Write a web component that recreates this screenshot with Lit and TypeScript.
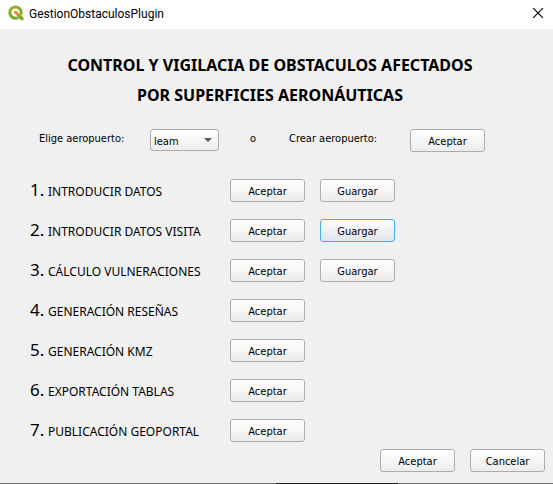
import { LitElement, html, css, svg, nothing } from "lit";
import { customElement, property, state } from "lit/decorators.js";

interface Step {
  label: string;
  save?: boolean;
  active?: boolean;
}

const STEPS: Step[] = [
  { label: "INTRODUCIR DATOS", save: true },
  { label: "INTRODUCIR DATOS VISITA", save: true, active: true },
  { label: "CÁLCULO VULNERACIONES", save: true },
  { label: "GENERACIÓN RESEÑAS" },
  { label: "GENERACIÓN KMZ" },
  { label: "EXPORTACIÓN TABLAS" },
  { label: "PUBLICACIÓN GEOPORTAL" },
];

const logo = svg`
  <defs>
    <linearGradient id="ring" x1="0" y1="0" x2="0" y2="1">
      <stop offset="0" stop-color="#93b023"/>
      <stop offset="1" stop-color="#7aa52c"/>
    </linearGradient>
  </defs>
  <circle cx="7.5" cy="7.6" r="5.7" fill="none" stroke="url(#ring)" stroke-width="3"/>
  <path d="M8.8 8.8h2.6l4.4 4v2.6h-2.8l-4.2-4.2z" fill="#7aa52c" stroke="#fff" stroke-width="0.6"/>
  <path d="M6 6h2.6l2 2v2.2h-2.2l-2.4-2.4z" fill="#ee8a33"/>`;

@customElement("push-button")
export class PushButton extends LitElement {
  @property() label = "";
  @property({ type: Boolean }) active = false;

  static styles = css`
    :host { display: block; width: 75px; }
    .push {
      display: block;
      box-sizing: border-box;
      width: 100%;
      height: 23px;
      padding: 2px 0 0;
      border: 1px solid #acacac;
      border-radius: 3px;
      background: linear-gradient(#ffffff, #ececec);
      color: #000;
      font: 11px/18px "DejaVu Sans Condensed", "DejaVu Sans", sans-serif;
      text-align: center;
    }
    .push.active {
      border-color: #3daef5;
      background: linear-gradient(#fdfeff, #e0e5ea);
    }
  `;

  render() {
    return html`<button type="button" class="push ${this.active ? "active" : ""}">${this.label}</button>`;
  }
}

@customElement("app-root")
export class AppRoot extends LitElement {
  @state() private steps = STEPS;

  static styles = css`
    :host {
      display: flex;
      flex-direction: column;
      min-height: 100vh;
      background: #f0f0f0;
      color: #000;
      font: 11px/16px "DejaVu Sans Condensed", "DejaVu Sans", sans-serif;
    }
    .titlebar {
      display: flex;
      align-items: center;
      gap: 5px;
      box-sizing: border-box;
      height: 29px;
      padding: 0 8px 3px;
      background: #fff;
      font: 12px/16px Roboto, sans-serif;
    }
    .logo { width: 16px; height: 16px; }
    .caption { flex: 1; padding-top: 1px; }
    .close {
      display: flex;
      align-items: center;
      justify-content: center;
      width: 14px;
      height: 14px;
      padding: 0;
      border: 0;
      background: none;
    }
    .heading {
      margin: 21px 13px 0 0;
      font-family: "Noto Sans", sans-serif;
      font-size: 16px;
      line-height: 30px;
      font-weight: 700;
      text-align: center;
    }
    .line { display: block; }
    .airport {
      display: grid;
      grid-template-columns: 111px 100px 39px 121px 75px;
      align-items: start;
      margin: 19px 0 0 39px;
    }
    .caption-text { padding-top: 2px; }
    .combo { position: relative; width: 69px; }
    .select {
      display: block;
      appearance: none;
      box-sizing: border-box;
      width: 100%;
      height: 22px;
      padding: 3px 18px 0 3px;
      border: 1px solid #acacac;
      border-radius: 3px;
      background: linear-gradient(#ffffff, #ececec);
      color: #000;
      font: inherit;
    }
    .arrow {
      position: absolute;
      top: 9px;
      right: 7px;
      width: 8px;
      height: 4px;
      background: #5a5a5a;
      clip-path: polygon(0 0, 100% 0, 50% 100%);
      pointer-events: none;
    }
    .steps {
      display: grid;
      gap: 17px;
      margin: 27px 0 0 30px;
      padding: 0;
      list-style: none;
      font-family: "Noto Sans", sans-serif;
    }
    .step {
      display: grid;
      grid-template-columns: 18px 182px 75px 90px;
      align-items: baseline;
      height: 23px;
    }
    .step push-button { align-self: start; }
    .step push-button + push-button { margin-left: 15px; }
    .number { font-size: 17px; line-height: 21px; }
    .name { font-size: 12px; line-height: 21px; }
    .footer {
      display: flex;
      justify-content: flex-end;
      gap: 15px;
      margin-top: 7px;
      padding: 0 8px 11px;
    }
    .edge {
      height: 1px;
      margin-top: auto;
      background: linear-gradient(90deg, #6e6e6e 50%, #1e1e1e 50% 72%, #6e6e6e 72%);
    }
  `;

  render() {
    return html`
      <header class="titlebar">
        <svg class="logo" viewBox="0 0 16 16" aria-hidden="true">${logo}</svg>
        <span class="caption">GestionObstaculosPlugin</span>
        <button class="close" type="button" aria-label="Cerrar">
          <svg width="10" height="10" viewBox="0 0 10 10">
            <path d="M0 0L10 10M10 0L0 10" stroke="#000" stroke-width="1.1"/>
          </svg>
        </button>
      </header>
      <h1 class="heading">
        <span class="line">CONTROL Y VIGILACIA DE OBSTACULOS AFECTADOS</span>
        <span class="line">POR SUPERFICIES AERONÁUTICAS</span>
      </h1>
      <div class="airport">
        <label class="caption-text" for="airport">Elige aeropuerto:</label>
        <div class="combo">
          <select class="select" id="airport"><option>leam</option></select>
          <span class="arrow"></span>
        </div>
        <span class="caption-text">o</span>
        <span class="caption-text">Crear aeropuerto:</span>
        <push-button label="Aceptar"></push-button>
      </div>
      <ol class="steps">
        ${this.steps.map(
          (s, i) => html`<li class="step">
            <span class="number">${i + 1}.</span>
            <span class="name">${s.label}</span>
            <push-button label="Aceptar"></push-button>
            ${s.save
              ? html`<push-button label="Guargar" ?active=${s.active}></push-button>`
              : nothing}
          </li>`,
        )}
      </ol>
      <footer class="footer">
        <push-button label="Aceptar"></push-button>
        <push-button label="Cancelar"></push-button>
      </footer>
      <div class="edge"></div>
    `;
  }
}
